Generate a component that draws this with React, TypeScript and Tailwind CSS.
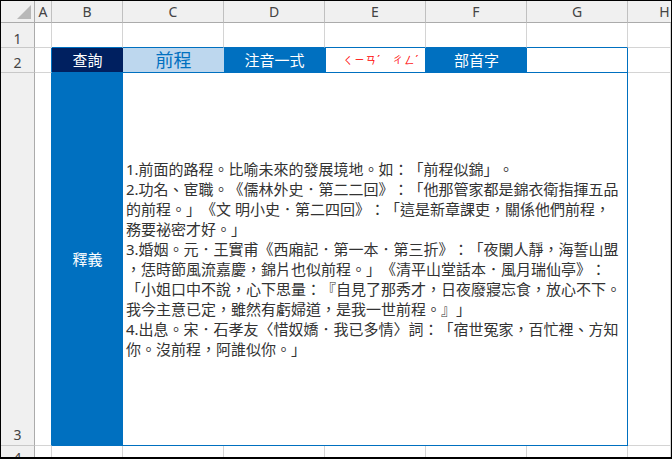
const colHead = "flex items-center justify-center bg-[#f0f0f0] border-r border-b border-r-[#c0c0c0] border-b-[#ababab] text-[14px] text-[#444444] overflow-hidden";
const rowHead = "flex justify-center bg-[#f0f0f0] border-r border-b border-r-[#ababab] border-b-[#c8c8c8] text-[14px] text-[#444444] overflow-hidden";
const grid = "bg-white border-r border-b border-r-[#d4d4d4] border-b-[#d4d4d4]";
const gridBlueBottom = "bg-white border-r border-b border-r-[#d4d4d4] border-b-[#0070c0]";

const lines = [
  "1.前面的路程。比喻未來的發展境地。如：「前程似錦」。",
  "2.功名、宦職。《儒林外史．第二二回》：「他那管家都是錦衣衛指揮五品",
  "的前程。」《文 明小史．第二四回》：「這是新章課吏，關係他們前程，",
  "務要祕密才好。」",
  "3.婚姻。元．王實甫《西廂記．第一本．第三折》：「夜闌人靜，海誓山盟",
  "，恁時節風流嘉慶，錦片也似前程。」《清平山堂話本．風月瑞仙亭》：",
  "「小姐口中不說，心下思量：『自見了那秀才，日夜廢寢忘食，放心不下。",
  "我今主意已定，雖然有虧婦道，是我一世前程。』」",
  "4.出息。宋．石孝友〈惜奴嬌．我已多情〉詞：「宿世冤家，百忙裡、方知",
  "你。沒前程，阿誰似你。」",
];

export default function App() {
  return (
    <div
      lang="zh-TW"
      className="w-[672px] h-[459px] overflow-hidden bg-white border-t border-l border-r border-b-2 border-black grid grid-cols-[34px_17px_71px_101px_101px_101px_101px_101px_1fr] grid-rows-[22px_25px_25px_373px_1fr] font-['Noto_Sans','Noto_Sans_CJK_TC',sans-serif] [text-spacing-trim:space-all]"
    >
      {/* column headers */}
      <div className="bg-[#f0f0f0] border-r border-b border-r-[#ababab] border-b-[#ababab] flex items-end justify-end pr-[3px] pb-[3px]">
        <svg width="14" height="14" viewBox="0 0 14 14">
          <polygon points="14,0 14,14 0,14" fill="#b8b8b8" />
        </svg>
      </div>
      {["A", "B", "C", "D", "E", "F", "G"].map((c) => (
        <div key={c} className={colHead}>{c}</div>
      ))}
      <div className={`${colHead} pl-[30px] border-r-0`}>H</div>

      {/* row 1 */}
      <div className={`${rowHead} pt-[5px]`}>1</div>
      <div className={grid} />
      <div className={gridBlueBottom} />
      <div className={gridBlueBottom} />
      <div className={gridBlueBottom} />
      <div className={gridBlueBottom} />
      <div className={gridBlueBottom} />
      <div className={`${gridBlueBottom} border-r-[#0070c0]`} />
      <div className={grid} />

      {/* row 2 */}
      <div className={`${rowHead} pt-[4px]`}>2</div>
      <div className="bg-white border-r border-b border-r-[#0070c0] border-b-[#d4d4d4]" />
      <div className="bg-[#002060] border-b border-b-[#0070c0] flex items-center justify-center text-white text-[15px] leading-none">查詢</div>
      <div className="bg-[#bdd7ee] border-b border-b-[#0070c0] flex items-center justify-center text-[#0070c0] text-[18px] leading-none">前程</div>
      <div className="bg-[#0070c0] flex items-center justify-center text-white text-[15px] leading-none">注音一式</div>
      <div className="bg-white border-b border-b-[#0070c0] border-x border-x-[#0070c0] flex items-center pl-[17px] text-[#ff0000] text-[10px] leading-none tracking-[1.4px]">ㄑㄧㄢˊ　ㄔㄥˊ</div>
      <div className="bg-[#0070c0] flex items-center justify-center text-white text-[15px] leading-none">部首字</div>
      <div className="bg-white border-r border-b border-[#0070c0]" />
      <div className={grid} />

      {/* row 3 */}
      <div className={`${rowHead} items-end`}>3</div>
      <div className="bg-white border-r border-b border-r-[#0070c0] border-b-[#d4d4d4]" />
      <div className="bg-[#0070c0] flex items-center justify-center text-white text-[15px]">釋義</div>
      <div className="col-span-5 bg-white border-r border-b border-[#0070c0] flex flex-col justify-center pl-[3px] text-[15px] leading-[20px] text-[#333333] whitespace-nowrap overflow-hidden">
        {lines.map((l, i) => (
          <div key={i}>{l}</div>
        ))}
      </div>
      <div className={grid} />

      {/* row 4 */}
      <div className={`${rowHead} border-b-0 pt-[1px]`}>4</div>
      {Array.from({ length: 8 }).map((_, i) => (
        <div key={i} className="bg-white border-r border-r-[#d4d4d4]" />
      ))}
    </div>
  );
}
